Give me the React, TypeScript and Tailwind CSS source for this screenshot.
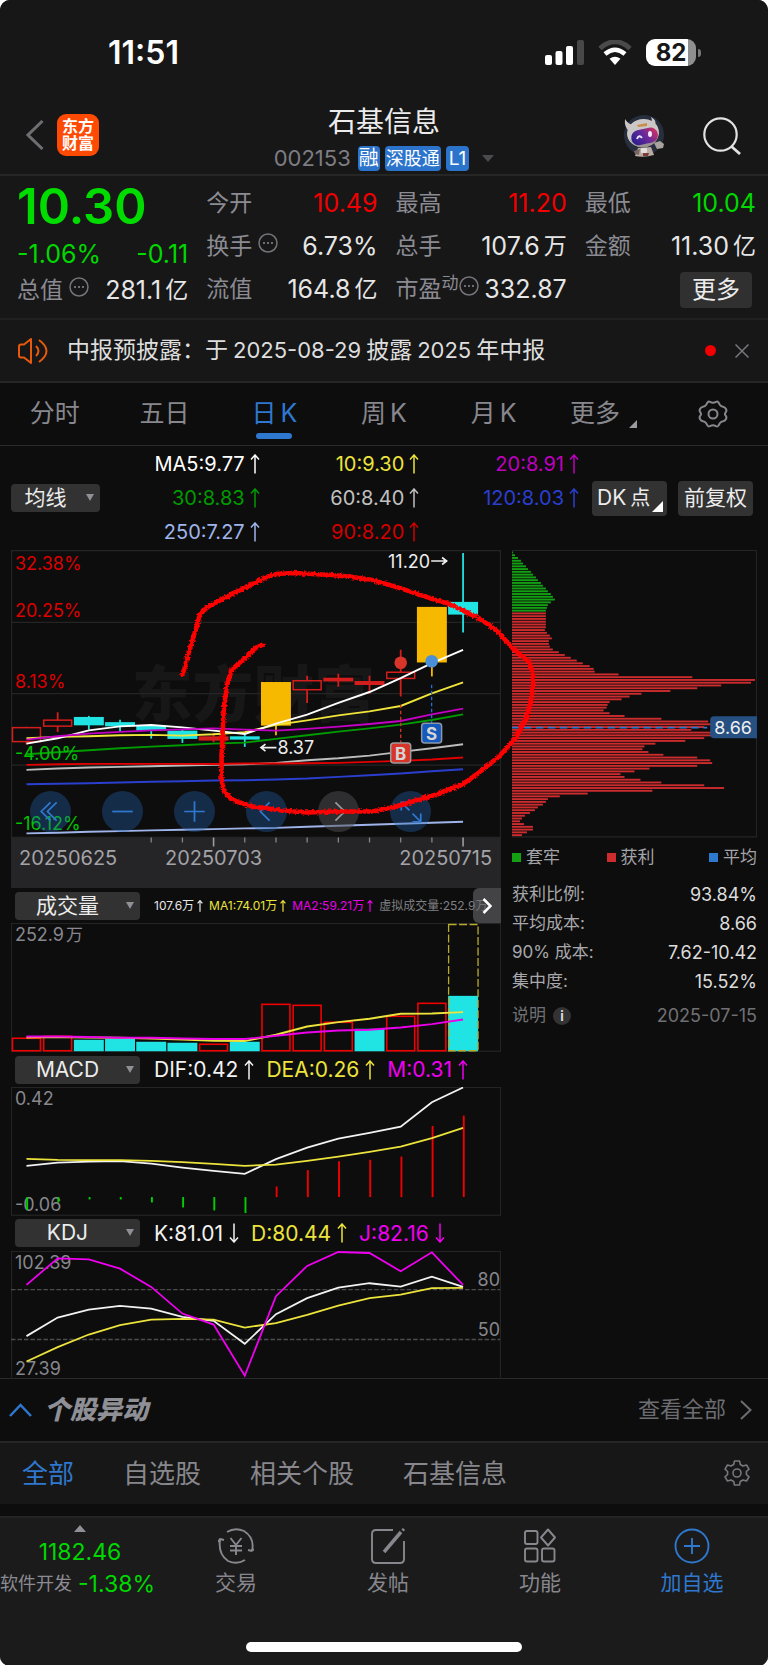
import type { ReactNode } from "react";

const STEP = 31.25;
const colX = (i: number) => 15.5 + STEP * i;
const line = (ys: number[]) => ys.map((y, i) => `${colX(i)},${y}`).join(" ");

const GRID = "#242424";
const CYAN = "#20e3e3";
const RED = "#d41d1d";
const GOLD = "#f7b900";

type Candle = { kind: "hollow" | "red" | "cyan" | "gold"; top: number; bottom: number; high: number; low: number };

const candles: Candle[] = [
  { kind: "hollow", top: 178, bottom: 192, high: 177, low: 195 },
  { kind: "hollow", top: 170.5, bottom: 176.5, high: 162.7, low: 182.3 },
  { kind: "cyan", top: 167.3, bottom: 175.7, high: 166.3, low: 180 },
  { kind: "cyan", top: 172.5, bottom: 176.7, high: 170, low: 182.3 },
  { kind: "cyan", top: 176, bottom: 181, high: 174.5, low: 189 },
  { kind: "cyan", top: 181, bottom: 189.3, high: 179.5, low: 193.3 },
  { kind: "red", top: 186.7, bottom: 191, high: 183.3, low: 192.7 },
  { kind: "cyan", top: 186.7, bottom: 190, high: 184.7, low: 197.3 },
  { kind: "gold", top: 132.3, bottom: 176, high: 132.3, low: 185.7 },
  { kind: "hollow", top: 131, bottom: 140, high: 126, low: 153.3 },
  { kind: "red", top: 128, bottom: 131.7, high: 124, low: 137 },
  { kind: "red", top: 131.3, bottom: 135.3, high: 126, low: 144 },
  { kind: "hollow", top: 122.5, bottom: 128.7, high: 100, low: 146.7 },
  { kind: "gold", top: 57, bottom: 112.7, high: 57, low: 126.7 },
  { kind: "cyan", top: 52, bottom: 64.7, high: 3, low: 82.7 },
];

const priceLines: { color: string; ys: number[] }[] = [
  { color: "#9fb4ea", ys: [284, 283.3, 282.3, 281.7, 281, 280.3, 279.7, 279, 278.5, 277.3, 276.3, 275.3, 274.3, 273.3, 272.3] },
  { color: "#2b3fcf", ys: [234.7, 234.3, 233.7, 233, 232.3, 231.7, 231, 230.7, 230, 229, 227.3, 225.7, 224, 221.7, 219.7] },
  { color: "#bdbdbd", ys: [220.3, 219, 218, 217.3, 216.7, 216, 215.3, 214.7, 213.3, 210.7, 208.7, 206, 202.3, 198.7, 194.7] },
  { color: "#e00000", ys: [215.3, 214.7, 214.3, 214.3, 214.3, 214.3, 214.5, 214, 214, 213.7, 213.3, 212.3, 211.3, 210, 208] },
  { color: "#009b00", ys: [204.7, 202.7, 200.7, 198.7, 197, 195.7, 194, 193, 189.3, 185.7, 182, 178.7, 175, 170.3, 164.7] },
  { color: "#f0e53a", ys: [188.7, 187.3, 186.7, 185.7, 185.3, 186, 184.7, 182.5, 175.3, 170.7, 165.7, 161.7, 156.3, 143.7, 132.7] },
  { color: "#ffffff", ys: [194, 188.7, 180.7, 176.7, 175.3, 177.7, 181, 184.3, 174, 165, 153.3, 142.3, 128.3, 113.3, 100] },
  { color: "#c400c4", ys: [190, 186.7, 184, 182.3, 180.7, 179.7, 178.7, 180, 181, 179.3, 177, 174.3, 171.3, 164.7, 159] },
];

const ink =
  "172,125 176,110 181,93 186,77 189,65 197,57 216,47 242,34 254,28 266,24 282,23 302,24 322,25 342,27 362,30 389,38 422,49 439,54 466,67 479,75 489,83 502,98 512,106 519,112 523,123 523,136 521,150 517,167 506,188 489,207 469,223 452,235 426,245 386,257 362,262 329,262 296,263 272,261 242,257 226,252 219,248 213,241 211,230 211,207 212,185 213,163 216,137 221,120 236,107 245,98 252,95";

const chips = [
  1, 3, 6, 9, 11, 14, 16, 19, 21, 24, 26, 29, 31, 34, 36, 39, 41, 43, 39, 36, 35, 34, 34, 34, 34, 34, 34, 34, 33, 35,
  38, 40, 37, 37, 38, 41, 47, 53, 59, 65, 71, 78, 82, 83, 107, 181, 244, 240, 210, 186, 159, 130, 118, 110, 98, 96,
  95, 92, 98, 113, 150, 197, 211, 193, 180, 205, 206, 193, 174, 144, 133, 131, 137, 152, 186, 199, 201, 186, 138,
  123, 109, 113, 129, 150, 193, 213, 141, 76, 48, 36, 34, 31, 26, 23, 18, 13, 10, 8, 12, 21, 21, 15, 10,
];
const TRAPPED = 22;

const volumes = [115, 113, 117, 116, 119, 120, 121, 119, 81, 82, 99, 106, 93, 80, 73];
const volumeUp = [1, 1, 0, 0, 0, 0, 1, 0, 1, 1, 1, 0, 1, 1, 0];
const volMa1 = [114.7, 114.3, 114.7, 115, 115.7, 116.7, 118, 118.3, 112, 103.7, 99.3, 96, 91, 90.7, 89.3];
const volMa2 = [113.7, 113.7, 114.3, 115, 115, 115.7, 116.3, 116.3, 113, 109.7, 107.7, 107, 104.7, 101.3, 96.7];

const dif = [79, 75.7, 74.7, 74.3, 76.7, 80.7, 84, 87, 72.3, 60.7, 51.7, 46, 39.7, 15.3, 0.5];
const dea = [72, 73, 73.3, 73.3, 74, 75.3, 77, 79, 77.7, 74, 69.7, 65, 59.7, 51.3, 41];
const hist = [123, 115.7, 112.7, 112.7, 115.7, 120.7, 123.7, 126.3, 99.7, 83.3, 74.3, 73, 69.7, 39, 28.7];
const ZERO = 110.3;

const kLine = [85.3, 66.7, 58.7, 55, 57.7, 66, 70, 93, 63.3, 47.3, 36.7, 32.3, 35.7, 25.7, 36];
const dLine = [110.7, 96.3, 83.7, 74.3, 68.7, 68, 68.7, 76.7, 72.3, 64, 54.7, 47.3, 43.7, 37.3, 37];
const jLine = [34, 7.3, 8.3, 17.7, 36, 62.7, 73.7, 125, 45.3, 15, 1, 2, 20.3, 1.3, 34];

function Arrow({ dir = "up", size = "lg" }: { dir?: "up" | "down"; size?: "lg" | "sm" }) {
  return (
    <svg
      viewBox="0 0 10 20"
      className={size === "lg" ? "h-5 w-[10px]" : "h-3 w-[6px]"}
      fill="none"
      stroke="currentColor"
      strokeWidth={size === "lg" ? 1.5 : 2}
      role="img"
      aria-label={dir}
    >
      <path d={dir === "up" ? "M5 19.500V1M1 5.500L5 1L9 5.500" : "M5 0.500V19M1 14.500L5 19L9 14.500"} />
    </svg>
  );
}

function Value({ value, unit }: { value: string; unit?: string }) {
  return (
    <span className="flex items-center gap-1">
      <span className="text-[25px]">{value}</span>
      {unit && <span>{unit}</span>}
    </span>
  );
}

function Stat({
  label,
  value,
  unit,
  dots,
  className = "text-[#e6e6e6]",
}: {
  label: ReactNode;
  value: string;
  unit?: string;
  dots?: boolean;
  className?: string;
}) {
  return (
    <div className={`flex h-[43px] items-center justify-between whitespace-nowrap ${className}`}>
      <span className="flex items-center gap-[6px] text-[#8b8b93]">
        {label}
        {dots && <Dots />}
      </span>
      <Value value={value} unit={unit} />
    </div>
  );
}

function Dots() {
  return (
    <svg viewBox="0 0 20 20" className="-mt-2 size-5 shrink-0" aria-hidden="true">
      <circle cx="10" cy="10" r="9" fill="none" stroke="#74747a" strokeWidth="1.500" />
      <circle cx="6" cy="10" r="1" fill="#8b8b93" />
      <circle cx="10" cy="10" r="1" fill="#8b8b93" />
      <circle cx="14" cy="10" r="1" fill="#8b8b93" />
    </svg>
  );
}

function Picker({ label, options, className }: { label: string; options: string[]; className: string }) {
  return (
    <div className={`relative h-7 ${className}`}>
      <select
        aria-label={label}
        className="block size-full appearance-none rounded bg-[#323232] pr-5 text-center text-[21px] leading-7 text-[#ececec] [text-align-last:center]"
      >
        {options.map((o) => (
          <option key={o}>{o}</option>
        ))}
      </select>
      <svg viewBox="0 0 8 7" className="pointer-events-none absolute top-[10px] right-[6px] h-[7px] w-2" aria-hidden="true">
        <path d="M0 0H8L4 7Z" fill="#8f8f96" />
      </svg>
    </div>
  );
}

function Robot() {
  return (
    <svg viewBox="0 0 42 42" className="size-[42px]" role="img" aria-label="助手">
      <defs>
        <linearGradient id="visor" x1="0" y1="0.600" x2="1" y2="0.300">
          <stop offset="0" stopColor="#2b1f8e" />
          <stop offset="0.550" stopColor="#6d2a9c" />
          <stop offset="1" stopColor="#d2305c" />
        </linearGradient>
      </defs>
      <circle cx="21" cy="20" r="20" fill="#272e3d" />
      <path d="M12 41L15 33L28 32L31 40Q21 43 12 41Z" fill="#b9aca5" />
      <path d="M11 36L17 34L16 40L12 39Z" fill="#7a6660" />
      <path d="M31 28L37 26L41 29L40 33L34 34Z" fill="#aaa29f" />
      <path d="M2 4Q1 12 6 16L10 10Q5 9 2 4Z" fill="#c9c5c6" />
      <path d="M28 2Q34 5 32 10L27 8Q30 6 28 2Z" fill="#c9c5c6" />
      <ellipse cx="20" cy="18" rx="16" ry="14" fill="#cbc7c7" transform="rotate(-12 20 18)" />
      <path d="M6 23Q12 35 24 32Q35 29 35 19Q31 28 21 29Q11 30 6 23Z" fill="#9c9492" />
      <rect x="8" y="14" width="27" height="15" rx="7.500" fill="url(#visor)" transform="rotate(-12 21 21)" />
      <path d="M14 10L24 8L24 11L15 12Z" fill="#c98b4a" />
      <path d="M14 24Q16 19 19 23" fill="none" stroke="#e9e4ff" strokeWidth="2" />
      <ellipse cx="27" cy="19" rx="2" ry="3" fill="#f2e8ff" />
      <rect x="18" y="33" width="6" height="5" rx="1" fill="#e2dedb" />
      <path d="M20 38H26L25 41H20Z" fill="#7d3b36" />
    </svg>
  );
}

function Header() {
  return (
    <header className="border-b-2 border-[#262626]">
      <div className="flex h-[105px] items-center justify-between pr-[67px] pl-[108px]">
        <span className="text-[32px] leading-8 font-semibold text-white">11:51</span>
        <div className="flex items-center gap-[14px]">
          <svg viewBox="0 0 39 25" className="h-[25px] w-[39px]" role="img" aria-label="信号">
            <rect x="0" y="15" width="7" height="10" rx="2" fill="#fff" />
            <rect x="10.500" y="11" width="7" height="14" rx="2" fill="#fff" />
            <rect x="21" y="6" width="7" height="19" rx="2" fill="#fff" />
            <rect x="32" y="0" width="7" height="25" rx="2" fill="#484848" />
          </svg>
          <svg viewBox="0 0 34 25" className="h-[25px] w-[34px]" fill="none" role="img" aria-label="Wi-Fi">
            <path d="M2 8.500Q17 -5 32 8.500" stroke="#4a4a4a" strokeWidth="5" />
            <path d="M7 14Q17 5.500 27 14" stroke="#fff" strokeWidth="4.500" />
            <path d="M17 25L11.500 18.800Q17 14.500 22.500 18.800Z" fill="#fff" />
          </svg>
          <div className="flex items-center gap-[2px]">
            <div className="flex h-[27px] w-[50px] items-center justify-center rounded-[9px] bg-[linear-gradient(90deg,#fff_84%,#8f8f8f_84%)] text-[24px] font-bold text-[#171717]">
              82
            </div>
            <span className="h-2 w-[3px] rounded-r-full bg-[#777]" />
          </div>
        </div>
      </div>
      <div className="grid h-[69px] grid-cols-[1fr_auto_1fr] items-start">
        <div className="flex items-center gap-[13px] pt-[9px] pl-[26px]">
          <button aria-label="返回">
            <svg viewBox="0 0 18 30" className="h-[30px] w-[18px]" fill="none" stroke="#6d6d72" strokeWidth="3">
              <path d="M16.500 1L2 15L16.500 29" />
            </svg>
          </button>
          <a
            href="#home"
            className="flex size-[42px] flex-col items-center justify-center rounded-[9px] bg-[#ff4a04] text-base leading-[17px] font-bold text-white"
          >
            <span>东方</span>
            <span>财富</span>
          </a>
        </div>
        <div className="flex flex-col items-center">
          <h1 className="text-[28px] leading-[34px] text-[#ececec]">石基信息</h1>
          <div className="mt-[7px] flex items-center text-xl leading-[25px]">
            <span className="mr-[7px] text-[22px] text-[#7d7d83]">002153</span>
            <span className="mr-[5px] rounded bg-[#2c74cb] px-px text-white">融</span>
            <span className="mr-[5px] rounded bg-[#2c74cb] px-px text-[18px] leading-[25px] text-white">深股通</span>
            <span className="rounded bg-[#2c74cb] px-[3px] text-[19px] leading-[25px] text-white">L1</span>
            <svg viewBox="0 0 12 7" className="ml-[13px] h-[7px] w-3" aria-hidden="true">
              <path d="M0 0H12L6 7Z" fill="#4a4a4d" />
            </svg>
          </div>
        </div>
        <div className="flex items-center justify-end gap-[38px] pt-[10px] pr-[27px]">
          <Robot />
          <button aria-label="搜索">
            <svg viewBox="0 0 38 38" className="size-[38px]" fill="none" stroke="#e2e2e2" strokeWidth="2.200">
              <circle cx="17.500" cy="17.500" r="16.200" />
              <path d="M28.500 29.500L37 37" strokeWidth="2.800" />
            </svg>
          </button>
        </div>
      </div>
    </header>
  );
}

function Quote() {
  return (
    <section className="grid h-[144px] grid-cols-4 gap-[18px] border-b-2 border-[#202020] pr-3 pl-[17px] text-[23px]">
      <div className="whitespace-nowrap">
        <div className="flex h-[62px] items-center text-[49px] font-semibold text-[#00dc00]">10.30</div>
        <div className="flex h-[34px] items-center justify-between text-[25px] text-[#00d800]">
          <span>-1.06%</span>
          <span>-0.11</span>
        </div>
        <div className="-mt-[3px]">
          <Stat label="总值" dots value="281.1" unit="亿" />
        </div>
      </div>
      <div className="pt-[6px]">
        <Stat label="今开" value="10.49" className="text-[#f00000]" />
        <Stat label="换手" dots value="6.73%" />
        <Stat label="流值" value="164.8" unit="亿" />
      </div>
      <div className="pt-[6px]">
        <Stat label="最高" value="11.20" className="text-[#f00000]" />
        <Stat label="总手" value="107.6" unit="万" />
        <div className="flex h-[43px] items-center justify-between whitespace-nowrap text-[#e6e6e6]">
          <span className="flex items-center text-[#8b8b93]">
            市盈
            <span className="-mt-3 text-[17px]">动</span>
            <Dots />
          </span>
          <Value value="332.87" />
        </div>
      </div>
      <div className="pt-[6px]">
        <Stat label="最低" value="10.04" className="text-[#00d800]" />
        <Stat label="金额" value="11.30" unit="亿" />
        <div className="flex h-[43px] items-center justify-end pr-1">
          <button className="h-9 w-[72px] rounded bg-[#303030] text-2xl leading-9 text-[#ececec]">更多</button>
        </div>
      </div>
    </section>
  );
}

function Notice() {
  return (
    <section className="flex h-[63px] items-center border-b-2 border-[#262626] pr-[19px] pl-[18px]">
      <svg viewBox="0 0 30 26" className="h-[26px] w-[30px]" fill="none" stroke="#e8590c" strokeWidth="2" aria-hidden="true">
        <path d="M13 1V25L6 19.500H3Q1 19.500 1 17.500V8.500Q1 6.500 3 6.500H6Z" strokeLinejoin="round" />
        <path d="M18 8Q23 13 18 18M21 2Q36 13 21 24" />
      </svg>
      <p className="ml-[19px] flex items-center gap-[5px] text-[23px] whitespace-nowrap text-[#dedede]">
        <span>中报预披露：于</span>
        <span className="text-[22px]">2025-08-29</span>
        <span>披露</span>
        <span className="text-[22px]">2025</span>
        <span>年中报</span>
      </p>
      <span className="ml-auto size-[11px] rounded-full bg-[#f00000]" />
      <button aria-label="关闭" className="ml-[19px]">
        <svg viewBox="0 0 14 14" className="size-[14px]" stroke="#77777c" strokeWidth="1.500">
          <path d="M0.500 0.500L13.500 13.500M13.500 0.500L0.500 13.500" />
        </svg>
      </button>
    </section>
  );
}

function PeriodTabs() {
  return (
    <nav className="grid h-[63px] grid-cols-7 items-center justify-items-center border-b border-[#2a2a2a] text-[25px] text-[#87878d]">
      <button>分时</button>
      <button>五日</button>
      <button className="relative flex gap-1 text-[#2f78cf]">
        <span>日</span>
        <span>K</span>
        <span className="absolute -bottom-[6px] left-1/2 h-[6px] w-9 -translate-x-1/2 rounded-full bg-[#2f78cf]" />
      </button>
      <button className="flex gap-1">
        <span>周</span>
        <span>K</span>
      </button>
      <button className="flex gap-1">
        <span>月</span>
        <span>K</span>
      </button>
      <button className="flex items-end gap-[9px]">
        更多
        <svg viewBox="0 0 8 8" className="mb-[5px] size-2" aria-hidden="true">
          <path d="M8 0V8H0Z" fill="#9a9a9f" />
        </svg>
      </button>
      <button aria-label="设置">
        <svg viewBox="0 0 30 28" className="h-7 w-[30px]" fill="none" stroke="#87878d" strokeWidth="2" strokeLinejoin="round">
          <path d="M9.500 2.500Q10.500 1 12 1.800Q15 3.500 18 1.800Q19.500 1 20.500 2.500L22 5Q23 6.500 25 6.700Q27 7 28 9Q29 11 27.500 12.500Q26.500 14 27.500 15.500Q29 17 28 19Q27 21 25 21.300Q23 21.500 22 23L20.500 25.500Q19.500 27 18 26.200Q15 24.500 12 26.200Q10.500 27 9.500 25.500L8 23Q7 21.500 5 21.300Q3 21 2 19Q1 17 2.500 15.500Q3.500 14 2.500 12.500Q1 11 2 9Q3 7 5 6.700Q7 6.500 8 5Z" />
          <circle cx="15" cy="14" r="4.500" />
        </svg>
      </button>
    </nav>
  );
}

const averages = [
  { text: "MA5:9.77", cls: "text-white" },
  { text: "10:9.30", cls: "text-[#ece33c]" },
  { text: "20:8.91", cls: "text-[#bf00bf]" },
  { text: "30:8.83", cls: "text-[#009b00]" },
  { text: "60:8.40", cls: "text-[#c0c0c0]" },
  { text: "120:8.03", cls: "text-[#2b3fcf]" },
  { text: "250:7.27", cls: "text-[#9fb4ea]" },
  { text: "90:8.20", cls: "text-[#d00000]" },
];

function Averages() {
  return (
    <section className="flex h-[104px] items-center pr-[15px] pl-[11px]">
      <Picker label="指标" options={["均线", "BOLL"]} className="w-[89px] shrink-0" />
      <div className="grid h-full grow grid-cols-3 content-center text-xl">
        {averages.map((a) => (
          <span key={a.text} className={`flex h-[34px] items-center justify-end gap-[5px] ${a.cls}`}>
            {a.text}
            <Arrow />
          </span>
        ))}
      </div>
      <button className="relative ml-[13px] flex h-[35px] w-[75px] shrink-0 items-center gap-1 rounded bg-[#323232] pl-[5px] text-[21px] text-[#ececec]">
        <span>DK</span>
        <span className="text-xl">点</span>
        <svg viewBox="0 0 11 11" className="absolute right-1 bottom-1 size-[11px]" aria-hidden="true">
          <path d="M11 0V11H0Z" fill="#fff" />
        </svg>
      </button>
      <button className="ml-[11px] h-[35px] w-[75px] shrink-0 rounded bg-[#323232] text-[21px] text-[#ececec]">前复权</button>
    </section>
  );
}

const controls: { label: string; path: string; muted?: boolean }[] = [
  { label: "最早", path: "M20 11L11 20L20 29M26 11L17 20L26 29" },
  { label: "缩小", path: "M10 20H30" },
  { label: "放大", path: "M10 20H30M20 10V30" },
  { label: "向左", path: "M23 11L14 20L23 29" },
  { label: "向右", path: "M17 11L26 20L17 29", muted: true },
  { label: "全屏", path: "M11 19V11H19M11 11L19 19M30 22V30H22M30 30L22 22" },
];

function PriceChart() {
  return (
    <div className="relative z-10">
      <svg viewBox="0 0 491 339" className="block h-auto w-full" role="img" aria-label="日K线">
        <text x="121" y="167" fontSize="61" fontWeight="900" fill="#171717">东方财富</text>
        <path d="M0.500 0.500H490.500V288H0.500ZM0.500 72.500H490M0.500 144H490M0.500 215.500H490" fill="none" stroke={GRID} strokeWidth="1.300" />
        {candles.map((c, i) => {
          const x = colX(i);
          const color = c.kind === "cyan" ? CYAN : c.kind === "gold" ? GOLD : RED;
          return (
            <g key={i} stroke={color} strokeWidth="1.800">
              {c.kind === "hollow" ? (
                <>
                  <path d={`M${x} ${c.high}V${c.top}M${x} ${c.bottom}V${c.low}`} />
                  <rect x={x - 14} y={c.top} width="28" height={c.bottom - c.top} fill="none" strokeWidth="1.500" />
                </>
              ) : (
                <>
                  <path d={`M${x} ${c.high}V${c.low}`} />
                  <rect x={x - 15} y={c.top} width="30" height={c.bottom - c.top} fill={color} stroke="none" />
                </>
              )}
            </g>
          );
        })}
        <circle cx="390.500" cy="113" r="6.300" fill="#d8352a" />
        {priceLines.map((l) => (
          <polyline key={l.color} points={line(l.ys)} fill="none" stroke={l.color} strokeWidth="1.900" />
        ))}
        <circle cx="421.500" cy="111.500" r="6.300" fill="#4a90d9" />
        <path d="M390.500 155V193" stroke="#d8352a" strokeWidth="1.300" strokeDasharray="3.500 2.500" />
        <path d="M421.500 135V173" stroke="#1f6fdc" strokeWidth="1.300" strokeDasharray="3.500 2.500" />
        <rect x="380.500" y="193.500" width="20" height="20" rx="3" fill="#d8352a" stroke="#9c9c9c" strokeWidth="1.500" />
        <text x="390.500" y="210" fontSize="17" fontWeight="700" fill="#d5d5d5" textAnchor="middle">B</text>
        <rect x="411.500" y="173.500" width="20" height="20" rx="3" fill="#1559bd" stroke="#8a97a8" strokeWidth="1.500" />
        <text x="421.500" y="190" fontSize="17" fontWeight="700" fill="#d5d5d5" textAnchor="middle">S</text>
        <g fontSize="18" fill="#dc0000">
          <text x="4" y="20">32.38%</text>
          <text x="4" y="67">20.25%</text>
          <text x="4" y="138">8.13%</text>
          <text x="4" y="210" fill="#00c400">-4.00%</text>
          <text x="4" y="281" fill="#00c400">-16.12%</text>
        </g>
        <g fontSize="18" fill="#ededed">
          <text x="420" y="18" textAnchor="end">11.20</text>
          <text x="267" y="204">8.37</text>
        </g>
        <path d="M421 11H436M432 7.500L436.500 11L432 14.500M266 198H251M255 194.500L250.500 198L255 201.500" fill="none" stroke="#ededed" strokeWidth="1.700" />
        <rect y="288.500" width="491" height="50.500" fill="#252527" />
        <path
          d={[4, 5, 7, 8, 9, 10, 11, 12, 13].map((i) => `M${colX(i)} 288V293`).join("")}
          stroke="#85858a"
          strokeWidth="1.300"
        />
        <path d={`M${colX(6)} 288V297M${colX(14)} 288V297`} stroke="#9c9ca1" strokeWidth="1.600" />
        <g fontSize="20" fill="#a3a3a8">
          <text x="8" y="316">20250625</text>
          <text x={colX(6)} y="316" textAnchor="middle">20250703</text>
          <text x="482" y="316" textAnchor="end">20250715</text>
        </g>
      </svg>
      <div className="absolute bottom-14 left-[19px] flex gap-[31px]">
        {controls.map((c) => (
          <button
            key={c.label}
            aria-label={c.label}
            className={c.muted ? "size-[41px] rounded-full bg-[#505054]/50 text-[#98989c]" : "size-[41px] rounded-full bg-[#2468b8]/35 text-[#2f78cf]"}
          >
            <svg viewBox="0 0 40 40" className="size-full" fill="none" stroke="currentColor" strokeWidth="1.700">
              <path d={c.path} />
            </svg>
          </button>
        ))}
      </div>
      <svg viewBox="0 0 491 339" className="pointer-events-none absolute inset-0 size-full overflow-visible" aria-hidden="true">
        <filter id="rough" x="-10%" y="-10%" width="120%" height="120%">
          <feTurbulence type="fractalNoise" baseFrequency="0.500" numOctaves="2" seed="4" result="n" />
          <feDisplacementMap in="SourceGraphic" in2="n" scale="4" xChannelSelector="R" yChannelSelector="G" />
        </filter>
        <polyline points={ink} fill="none" stroke="#ff0000" strokeWidth="4.600" strokeLinejoin="round" strokeLinecap="round" filter="url(#rough)" />
      </svg>
    </div>
  );
}

function VolumeChart() {
  return (
    <svg viewBox="0 0 491 129" className="block h-auto w-full" role="img" aria-label="成交量图">
      <rect x="0.500" y="0.500" width="490" height="128" fill="none" stroke={GRID} strokeWidth="1.200" />
      {volumes.map((y, i) =>
        volumeUp[i] ? (
          <rect key={i} x={colX(i) - 14} y={y + 0.500} width="28" height={127.500 - y} fill="none" stroke="#f00000" strokeWidth="1.600" />
        ) : (
          <rect key={i} x={colX(i) - 15} y={y} width="30" height={128.500 - y} fill={CYAN} />
        )
      )}
      <rect x="438.500" y="1.500" width="29.500" height="126.500" fill="none" stroke="#b9aa2c" strokeWidth="1.300" strokeDasharray="8 2.500" />
      <polyline points={line(volMa1)} fill="none" stroke="#ece33c" strokeWidth="1.900" />
      <polyline points={line(volMa2)} fill="none" stroke="#ea00ea" strokeWidth="1.900" />
      <text x="4" y="18" fontSize="18" fill="#87878d">252.9</text>
      <text x="55" y="18" fontSize="17" fill="#87878d">万</text>
    </svg>
  );
}

function MacdChart() {
  return (
    <svg viewBox="0 0 491 129" className="block h-auto w-full" role="img" aria-label="MACD图">
      <rect x="0.500" y="0.500" width="490" height="128" fill="none" stroke={GRID} strokeWidth="1.200" />
      <text x="4" y="18" fontSize="18" fill="#87878d">0.42</text>
      <text x="4" y="124" fontSize="18" fill="#87878d">-0.06</text>
      {hist.map((y, i) => (
        <path key={i} d={`M${colX(i) + 0.700} ${ZERO}V${y}`} stroke={y > ZERO ? "#00d000" : "#f00000"} strokeWidth="1.900" />
      ))}
      <polyline points={line(dif)} fill="none" stroke="#f2f2f2" strokeWidth="1.800" />
      <polyline points={line(dea)} fill="none" stroke="#ece33c" strokeWidth="1.800" />
    </svg>
  );
}

function KdjChart() {
  return (
    <svg viewBox="0 0 491 127" className="block h-auto w-full" role="img" aria-label="KDJ图">
      <path d="M0.500 127V0.500H490.500V127" fill="none" stroke={GRID} strokeWidth="1.200" />
      <path d="M0 38.700H490M0 88.700H490" stroke="#4c4c4f" strokeWidth="1.300" strokeDasharray="4.500 2" />
      <g fontSize="18" fill="#87878d">
        <text x="4" y="18">102.39</text>
        <text x="4" y="124">27.39</text>
        <text x="490" y="35" textAnchor="end">80</text>
        <text x="490" y="85" textAnchor="end">50</text>
      </g>
      <polyline points={line(kLine)} fill="none" stroke="#f2f2f2" strokeWidth="1.800" />
      <polyline points={line(dLine)} fill="none" stroke="#ece33c" strokeWidth="1.800" />
      <polyline points={line(jLine)} fill="none" stroke="#f000f0" strokeWidth="1.800" />
    </svg>
  );
}

function Reading({ text, dir = "up", className }: { text: string; dir?: "up" | "down"; className: string }) {
  return (
    <span className={`flex items-center gap-[6px] ${className}`}>
      {text}
      <Arrow dir={dir} />
    </span>
  );
}

function ChipPanel() {
  return (
    <aside>
      <svg viewBox="0 0 246 289" className="block h-auto w-full" role="img" aria-label="筹码分布">
        <path d="M0 0.500H245.500V288H0" fill="none" stroke={GRID} strokeWidth="1.200" />
        {chips.map((w, i) => (
          <rect key={i} x="0" y={1.500 + i * 2.783} width={w} height="1.900" fill={i < TRAPPED ? "#13a013" : "#cc2c2e"} />
        ))}
        <path d="M0 178.300H196" stroke="#2f78cf" strokeWidth="1.700" strokeDasharray="7.500 4.500" />
        <path d="M203 167H246V189H203Q199 189 199 185V171Q199 167 203 167Z" fill="#264f82" />
        <text x="222" y="184.500" fontSize="18" fill="#f0f0f0" textAnchor="middle">8.66</text>
      </svg>
      <div className="flex h-10 items-center justify-between text-[17px] text-[#a3a3a8]">
        <span className="flex items-center gap-[5px]"><i className="size-[9px] bg-[#13a013]" />套牢</span>
        <span className="flex items-center gap-[5px] pr-2"><i className="size-[9px] bg-[#cc2c2e]" />获利</span>
        <span className="flex items-center gap-[5px]"><i className="size-[9px] bg-[#2f78cf]" />平均</span>
      </div>
      <dl className="grid grid-cols-[auto_1fr] pt-[2px] text-[17px] leading-[29px] text-[#a8a8ac] [&>dd]:text-right [&>dd]:text-[18px] [&>dd]:leading-[29px] [&>dd]:text-[#dcdcdc]">
        <dt>获利比例:</dt>
        <dd>93.84%</dd>
        <dt>平均成本:</dt>
        <dd>8.66</dd>
        <dt>90% 成本:</dt>
        <dd>7.62-10.42</dd>
        <dt>集中度:</dt>
        <dd>15.52%</dd>
      </dl>
      <div className="mt-[5px] flex h-[30px] items-center text-[17px] text-[#707074]">
        说明
        <button aria-label="说明详情" className="ml-[7px] size-[18px] rounded-full bg-[#333] text-center text-[13px] leading-[18px] font-bold text-[#ddd]">
          i
        </button>
        <time className="ml-auto text-[18px]">2025-07-15</time>
      </div>
    </aside>
  );
}

function Charts() {
  return (
    <section className="grid grid-cols-[490fr_245fr] items-start gap-x-[11px] px-[11px]">
      <div className="min-w-0">
        <PriceChart />
        <div className="relative flex h-[35px] items-center gap-[6px] overflow-hidden pl-1 text-xs whitespace-nowrap">
          <Picker label="副图一" options={["成交量", "成交额"]} className="mr-[8px] w-[125px] shrink-0" />
          <span className="flex items-center gap-[3px] text-[#e6e6e6]">107.6万<Arrow size="sm" /></span>
          <span className="flex items-center gap-[3px] text-[#ece33c]">MA1:74.01万<Arrow size="sm" /></span>
          <span className="flex items-center gap-[3px] text-[#ea00ea]">MA2:59.21万<Arrow size="sm" /></span>
          <span className="text-[#808085]">虚拟成交量:252.9万</span>
          <button aria-label="更多指标" className="absolute top-0 right-0 flex h-[35px] w-7 items-center justify-center rounded-l-md bg-[#68686c]/60">
            <svg viewBox="0 0 10 16" className="h-4 w-[10px]" fill="none" stroke="#fff" strokeWidth="2.500">
              <path d="M1.500 1L8.500 8L1.500 15" />
            </svg>
          </button>
        </div>
        <VolumeChart />
        <div className="flex h-[35px] items-center gap-3 pl-1 text-[21px] whitespace-nowrap">
          <Picker label="副图二" options={["MACD", "RSI"]} className="mr-[2px] w-[125px] shrink-0" />
          <Reading text="DIF:0.42" className="text-[#f2f2f2]" />
          <Reading text="DEA:0.26" className="text-[#ece33c]" />
          <Reading text="M:0.31" className="text-[#f000f0]" />
        </div>
        <MacdChart />
        <div className="flex h-[35px] items-center gap-3 pl-1 text-[21px] whitespace-nowrap">
          <Picker label="副图三" options={["KDJ", "WR"]} className="mr-[2px] w-[125px] shrink-0" />
          <Reading text="K:81.01" dir="down" className="text-[#f2f2f2]" />
          <Reading text="D:80.44" className="text-[#ece33c]" />
          <Reading text="J:82.16" dir="down" className="text-[#f000f0]" />
        </div>
        <KdjChart />
      </div>
      <ChipPanel />
    </section>
  );
}

function Movements() {
  return (
    <section>
      <div className="flex h-[63px] items-center border-t border-[#2a2a2a] pr-4 pl-[9px]">
        <svg viewBox="0 0 23 14" className="h-[14px] w-[23px]" fill="none" stroke="#2f78cf" strokeWidth="2.500" aria-hidden="true">
          <path d="M1 13L11.500 2L22 13" />
        </svg>
        <h2 className="ml-3 text-[26px] font-black text-[#8f8f96] italic">个股异动</h2>
        <a href="#all" className="ml-auto flex items-center gap-[14px] text-[22px] text-[#6c6c71]">
          查看全部
          <svg viewBox="0 0 12 20" className="h-5 w-3" fill="none" stroke="currentColor" strokeWidth="2" aria-hidden="true">
            <path d="M1 1L10.500 10L1 19" />
          </svg>
        </a>
      </div>
      <div className="flex h-[63px] items-center gap-[49px] border-t-2 border-[#262626] bg-[#171717] pr-[18px] pl-[22px] text-[26px] whitespace-nowrap text-[#87878d]">
        <button className="text-[#2f78cf]">全部</button>
        <button>自选股</button>
        <button>相关个股</button>
        <button>石基信息</button>
        <button aria-label="设置" className="ml-auto">
          <svg viewBox="0 0 26 26" className="size-[26px]" fill="none" stroke="#77777c" strokeWidth="1.600" strokeLinejoin="round">
            <path d="M10.500 1H15.500L16.300 4.500L19 6L22.500 5L25 9.200L22.400 11.500V14.500L25 16.800L22.500 21L19 20L16.300 21.500L15.500 25H10.500L9.700 21.500L7 20L3.500 21L1 16.800L3.600 14.500V11.500L1 9.200L3.500 5L7 6L9.700 4.500Z" />
            <circle cx="13" cy="13" r="4" />
          </svg>
        </button>
      </div>
    </section>
  );
}

function NavItem({ label, className = "text-[#87878d]", children }: { label: string; className?: string; children: ReactNode }) {
  return (
    <a href={`#${label}`} className={`flex flex-col items-center pt-[10px] text-[21px] ${className}`}>
      <svg viewBox="0 0 36 36" className="size-9" fill="none" stroke="currentColor" strokeWidth="1.900" strokeLinejoin="round" aria-hidden="true">
        {children}
      </svg>
      <span className="mt-[3px] leading-8">{label}</span>
    </a>
  );
}

function BottomBar() {
  return (
    <footer className="mt-3 border-t-2 border-[#242424] bg-[#1b1b1b]">
      <div className="grid h-[124px] grid-cols-[160fr_152fr_152fr_152fr_152fr]">
        <div className="flex flex-col items-center pt-[7px] whitespace-nowrap text-[#00d800]">
          <svg viewBox="0 0 12 7" className="h-[7px] w-3" aria-hidden="true">
            <path d="M0 7H12L6 0Z" fill="#8f8f96" />
          </svg>
          <span className="mt-1 text-[23px] leading-8">1182.46</span>
          <div className="flex items-center gap-[6px] self-start text-[23px] leading-8">
            <span className="text-[18px] text-[#8b8b93]">软件开发</span>
            -1.38%
          </div>
        </div>
        <NavItem label="交易">
          <path d="M9 4Q17 -1 26 3Q37 10 34 23M34 23L30 22M34 23L36 21M27 32Q19 37 10 33Q0 26 2 12M0 14L2 11L6 12" />
          <path d="M12.500 10L18 17L23.500 10M18 17V27M12 18H24M12 22.500H24" />
        </NavItem>
        <NavItem label="发帖">
          <path d="M23 2H6Q2 2 2 6V31Q2 35 6 35H30Q34 35 34 31V13" />
          <path d="M14 24L31 4" strokeWidth="3.500" />
          <path d="M32.500 2.500L34 1" strokeWidth="3" />
        </NavItem>
        <NavItem label="功能">
          <rect x="3" y="3" width="12.500" height="13" rx="2" />
          <path d="M26 1.500L33 9.500L26 17.500L19 9.500Z" />
          <rect x="3" y="20.500" width="12.500" height="13" rx="2" />
          <rect x="20" y="20.500" width="12.500" height="13" rx="2" />
        </NavItem>
        <NavItem label="加自选" className="text-[#2f78cf]">
          <circle cx="18" cy="18" r="16.500" />
          <path d="M18 10V26M10 18H26" />
        </NavItem>
      </div>
      <div className="mx-auto h-[10px] w-[276px] rounded-full bg-white" />
      <div className="h-[14px]" />
    </footer>
  );
}

export default function App() {
  return (
    <div className="min-h-screen bg-white font-['Inter','Noto_Sans_CJK_SC',sans-serif]">
      <main className="overflow-hidden rounded-[10px] bg-[#0d0d0d]">
        <div className="bg-[#171717]">
          <Header />
          <Quote />
          <Notice />
        </div>
        <PeriodTabs />
        <Averages />
        <Charts />
        <Movements />
        <BottomBar />
      </main>
    </div>
  );
}
